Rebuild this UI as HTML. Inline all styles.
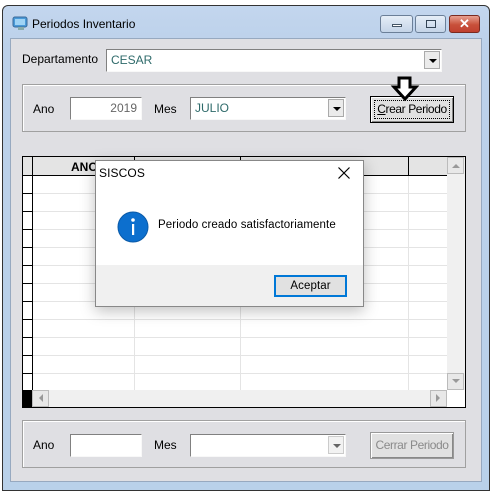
<!DOCTYPE html>
<html><head><meta charset="utf-8"><style>
*{margin:0;padding:0;box-sizing:border-box}
body{width:492px;height:492px;background:#fff;position:relative;overflow:hidden;font-family:"Liberation Sans",sans-serif;font-size:12px;color:#000}
.a{position:absolute;white-space:nowrap}
.win{left:2px;top:5px;width:488px;height:486px;border:1px solid #333;border-radius:6px 6px 0 0;background:linear-gradient(#c3d6ee,#bcd1ea 40px,#b9d1ea)}
.client{left:10px;top:38px;width:472px;height:444px;background:#dfdfe3;border:1px solid #97a9c0}
.sunk{background:#fff;border-top:1px solid #808080;border-left:1px solid #808080;border-bottom:1px solid #f8f8f8;border-right:1px solid #f8f8f8}
.grp{border:1px solid #a0a0a0;box-shadow:1px 1px 0 #fff inset}
.dd{width:16px;height:18px;background:#ebebeb;border:1px solid #aaa;top:1px;right:1px}
.dd:after{content:"";position:absolute;left:4px;top:7px;border-left:4px solid transparent;border-right:4px solid transparent;border-top:4px solid #000}
.btn{background:#e1e1e1;border:1px solid #555;box-shadow:inset 1px 1px #fff,inset -1px -1px #888;text-align:center;line-height:24px;white-space:nowrap;letter-spacing:-0.4px}
.wb{top:15px;height:18px;border:1px solid #6b7f98;border-radius:3px;background:linear-gradient(#e6eef8,#c4d4e8)}
.d{font-family:"Liberation Sans",sans-serif;font-size:11.5px;letter-spacing:0.1px}
</style></head><body>
<div class="a win"></div>
<svg class="a" style="left:12px;top:15px" width="18" height="16"><rect x="1" y="2" width="14" height="10" rx="2" fill="#4a9ad8" stroke="#3a6a9a"/><rect x="3" y="4" width="10" height="6" fill="#9fd3f5"/><rect x="6" y="12" width="6" height="3" fill="#8aa"/></svg>
<div class="a" style="left:32px;top:17px;font-size:12px">Periodos Inventario</div>
<div class="a wb" style="left:380px;width:33px"><div class="a" style="left:11px;top:8px;width:10px;height:3px;background:#fff;border:1px solid #456"></div></div>
<div class="a wb" style="left:415px;width:31px"><div class="a" style="left:10px;top:4px;width:10px;height:8px;border:1px solid #345"></div></div>
<div class="a wb" style="left:449px;width:31px;background:linear-gradient(#e8a090,#c8503a 55%,#c04030);border-color:#7a2a20;color:#fff;font-weight:bold;text-align:center;line-height:15px;font-size:13px">✕</div>
<div class="a client"></div>
<div class="a" style="left:22px;top:52px">Departamento</div>
<div class="a sunk" style="left:106px;top:49px;width:336px;height:23px"><span class="a" style="left:4px;top:3px;color:#2e6a6a">CESAR</span><div class="a dd"></div></div>
<div class="a grp" style="left:22px;top:84px;width:444px;height:48px"></div>
<div class="a" style="left:33px;top:102px">Ano</div>
<div class="a sunk" style="left:70px;top:97px;width:72px;height:23px"><span class="a" style="right:4px;top:3px;color:#666">2019</span></div>
<div class="a" style="left:154px;top:102px">Mes</div>
<div class="a sunk" style="left:190px;top:97px;width:156px;height:23px"><span class="a" style="left:4px;top:3px;color:#2e6a6a">JULIO</span><div class="a dd"></div></div>
<div class="a btn" style="left:370px;top:96px;width:84px;height:27px;border-color:#000"><div style="margin:3px;border:1px dotted #000;line-height:17px"><u>C</u>rear Periodo</div></div>
<svg class="a" style="left:390px;top:76px" width="30" height="26"><path d="M9 2h11v9h6l-11 12L4 11h5z" fill="#fff" stroke="#000" stroke-width="3" stroke-linejoin="miter"/></svg>
<div class="a" style="left:22px;top:156px;width:444px;height:252px;background:#fff;border:1px solid #000"></div>
<svg class="a" style="left:23px;top:157px" width="442" height="250">
<rect x="0" y="0" width="442" height="18" fill="#e4e4e4"/>
<g stroke="#e4e4e4"><line x1="10" y1="36.5" x2="424" y2="36.5"/><line x1="10" y1="54.5" x2="424" y2="54.5"/><line x1="10" y1="72.5" x2="424" y2="72.5"/><line x1="10" y1="90.5" x2="424" y2="90.5"/><line x1="10" y1="108.5" x2="424" y2="108.5"/><line x1="10" y1="126.5" x2="424" y2="126.5"/><line x1="10" y1="144.5" x2="424" y2="144.5"/><line x1="10" y1="162.5" x2="424" y2="162.5"/><line x1="10" y1="180.5" x2="424" y2="180.5"/><line x1="10" y1="198.5" x2="424" y2="198.5"/><line x1="10" y1="216.5" x2="424" y2="216.5"/>
<line x1="111.5" y1="18" x2="111.5" y2="233"/><line x1="217.5" y1="18" x2="217.5" y2="233"/><line x1="385.5" y1="18" x2="385.5" y2="233"/></g>
<g stroke="#000"><line x1="0" y1="18.5" x2="424" y2="18.5"/><line x1="9.5" y1="0" x2="9.5" y2="233"/><line x1="111.5" y1="0" x2="111.5" y2="18"/><line x1="217.5" y1="0" x2="217.5" y2="18"/><line x1="385.5" y1="0" x2="385.5" y2="18"/>
<line x1="0" y1="36.5" x2="10" y2="36.5"/><line x1="0" y1="54.5" x2="10" y2="54.5"/><line x1="0" y1="72.5" x2="10" y2="72.5"/><line x1="0" y1="90.5" x2="10" y2="90.5"/><line x1="0" y1="108.5" x2="10" y2="108.5"/><line x1="0" y1="126.5" x2="10" y2="126.5"/><line x1="0" y1="144.5" x2="10" y2="144.5"/><line x1="0" y1="162.5" x2="10" y2="162.5"/><line x1="0" y1="180.5" x2="10" y2="180.5"/><line x1="0" y1="198.5" x2="10" y2="198.5"/><line x1="0" y1="216.5" x2="10" y2="216.5"/></g>
<rect x="0" y="233" width="9" height="17" fill="#000"/>
<rect x="424" y="0" width="18" height="233" fill="#f0f0f0"/>
<rect x="9" y="233" width="415" height="17" fill="#f0f0f0"/>
<rect x="424.5" y="0.5" width="16" height="16" fill="#e8e8e8" stroke="#bbb"/><path d="M429 11l4-4 4 4z" fill="#999"/>
<rect x="424.5" y="216.5" width="16" height="16" fill="#e8e8e8" stroke="#bbb"/><path d="M429 222l4 4 4-4z" fill="#999"/>
<rect x="9.5" y="233.5" width="16" height="16" fill="#e8e8e8" stroke="#bbb"/><path d="M20 237l-4 4 4 4z" fill="#999"/>
<rect x="407.5" y="233.5" width="16" height="16" fill="#e8e8e8" stroke="#bbb"/><path d="M413 237l4 4-4 4z" fill="#999"/>
<text x="48" y="14" font-family="Liberation Sans" font-weight="bold" font-size="12">ANO</text>
</svg>
<div class="a" style="left:95px;top:160px;width:269px;height:147px;background:#fff;border:1px solid #888;box-shadow:0 4px 14px rgba(0,0,0,.25)">
<div class="a d" style="left:3px;top:5px;font-size:12px">SISCOS</div>
<svg class="a" style="left:241px;top:5px" width="14" height="14"><path d="M1.5 1.5l11 11M12.5 1.5l-11 11" stroke="#000" stroke-width="1.2"/></svg>
<div class="a" style="left:21px;top:50px;width:32px;height:32px"><svg width="32" height="32"><circle cx="16" cy="16" r="15" fill="#0c6fce" stroke="#0a5aa8"/><circle cx="16" cy="9" r="1.8" fill="#fff"/><rect x="15" y="13" width="2.2" height="11" fill="#fff"/></svg></div>
<div class="a d" style="left:62px;top:58px">Periodo creado satisfactoriamente</div>
<div class="a" style="left:0;top:104px;width:267px;height:41px;background:#f0f0f0"></div>
<div class="a d" style="left:178px;top:114px;width:73px;height:22px;background:#e1e1e1;border:2px solid #0078d7;text-align:center;line-height:18px">Aceptar</div>
</div>
<div class="a grp" style="left:22px;top:420px;width:444px;height:48px"></div>
<div class="a" style="left:33px;top:438px">Ano</div>
<div class="a sunk" style="left:70px;top:434px;width:72px;height:23px"></div>
<div class="a" style="left:154px;top:438px">Mes</div>
<div class="a sunk" style="left:190px;top:434px;width:156px;height:23px"><div class="a dd" style="opacity:.6"></div></div>
<div class="a btn" style="left:370px;top:432px;width:84px;height:27px;color:#8a8a8a;border-color:#999">Cerrar Periodo</div>
</body></html>
